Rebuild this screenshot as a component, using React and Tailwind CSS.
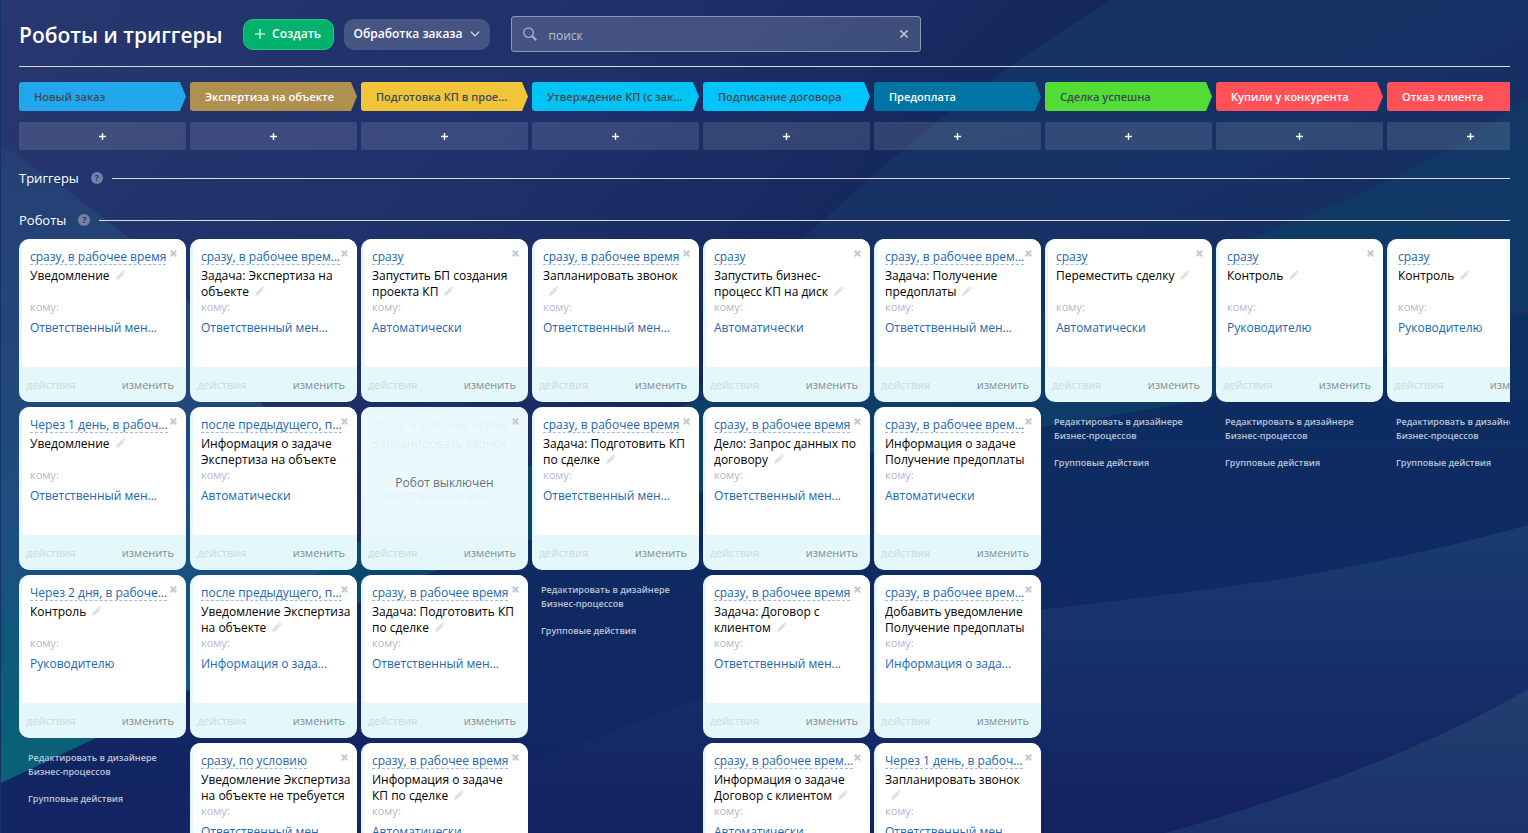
import React from "react";

const NOW = "сразу";
const WORK = "сразу, в рабочее время";
const WORK_CUT = "сразу, в рабочее врем...";
const MANAGER = "Ответственный мен...";
const AUTO = "Автоматически";
const HEAD = "Руководителю";

const columns = [
  {
    name: "Новый заказ",
    tone: "bg-[#22a7ec] text-[#3d4b58]",
    robots: [
      [WORK, "Уведомление", MANAGER],
      ["Через 1 день, в рабоч...", "Уведомление", MANAGER],
      ["Через 2 дня, в рабоче...", "Контроль", HEAD],
    ],
  },
  {
    name: "Экспертиза на объекте",
    tone: "bg-[#b0904f] text-white",
    robots: [
      [WORK_CUT, "Задача: Экспертиза на объекте", MANAGER],
      ["после предыдущего, п...", "Информация о задаче Экспертиза на объекте", AUTO],
      ["после предыдущего, п...", "Уведомление Экспертиза на объекте", "Информация о зада..."],
      ["сразу, по условию", "Уведомление Экспертиза на объекте не требуется", MANAGER],
    ],
  },
  {
    name: "Подготовка КП в прое...",
    tone: "bg-[#f1c53a] text-[#3d4b58]",
    robots: [
      [NOW, "Запустить БП создания проекта КП", AUTO],
      [WORK, "Запланировать звонок", MANAGER, true],
      [WORK, "Задача: Подготовить КП по сделке", MANAGER],
      [WORK, "Информация о задаче КП\u00a0по сделке", AUTO],
    ],
  },
  {
    name: "Утверждение КП (с зак...",
    tone: "bg-[#00c4f3] text-[#3d4b58]",
    robots: [
      [WORK, "Запланировать звонок", MANAGER],
      [WORK, "Задача: Подготовить КП по сделке", MANAGER],
    ],
  },
  {
    name: "Подписание договора",
    tone: "bg-[#00c4fb] text-[#3d4b58]",
    robots: [
      [NOW, "Запустить бизнес-процесс КП на диск", AUTO],
      [WORK, "Дело: Запрос данных по договору", MANAGER],
      [WORK, "Задача: Договор с клиентом", MANAGER],
      [WORK_CUT, "Информация о задаче Договор с клиентом", AUTO],
    ],
  },
  {
    name: "Предоплата",
    tone: "bg-[#0075a5] text-white",
    robots: [
      [WORK_CUT, "Задача: Получение предоплаты", MANAGER],
      [WORK_CUT, "Информация о задаче Получение предоплаты", AUTO],
      [WORK_CUT, "Добавить уведомление Получение предоплаты", "Информация о зада..."],
      ["Через 1 день, в рабоч...", "Запланировать звонок", MANAGER],
    ],
  },
  {
    name: "Сделка успешна",
    tone: "bg-[#52dc35] text-[#3d4b58]",
    robots: [[NOW, "Переместить сделку", AUTO]],
  },
  {
    name: "Купили у конкурента",
    tone: "bg-[#ff5157] text-white",
    robots: [[NOW, "Контроль", HEAD]],
  },
  {
    name: "Отказ клиента",
    tone: "bg-[#ff5157] text-white",
    robots: [[NOW, "Контроль", HEAD]],
  },
];

function Backdrop() {
  return (
    <svg className="absolute inset-0 -z-10 h-full w-full" viewBox="0 0 1528 833" preserveAspectRatio="none" aria-hidden="true">
      <defs>
        <linearGradient id="base" x1="0" y1="0" x2="1" y2="0.5">
          <stop offset="0" stopColor="#28376f" />
          <stop offset="0.35" stopColor="#1e306a" />
          <stop offset="0.62" stopColor="#12265a" />
          <stop offset="1" stopColor="#102a5e" />
        </linearGradient>
        <linearGradient id="left" x1="0" y1="0" x2="0" y2="1">
          <stop offset="0" stopColor="#263f73" />
          <stop offset="0.35" stopColor="#22487a" />
          <stop offset="0.6" stopColor="#1b4f80" />
          <stop offset="0.75" stopColor="#0d5a78" />
          <stop offset="1" stopColor="#076677" />
        </linearGradient>
        <linearGradient id="slope" x1="0" y1="0" x2="1" y2="1">
          <stop offset="0" stopColor="#163565" />
          <stop offset="1" stopColor="#162d64" />
        </linearGradient>
        <linearGradient id="teal" x1="1" y1="0" x2="0" y2="1">
          <stop offset="0" stopColor="#123766" />
          <stop offset="0.5" stopColor="#0e3d66" />
          <stop offset="1" stopColor="#0a4f70" />
        </linearGradient>
        <linearGradient id="deep" x1="0" y1="0" x2="0" y2="1">
          <stop offset="0" stopColor="#0b2f60" />
          <stop offset="0.5" stopColor="#102a63" />
          <stop offset="1" stopColor="#132463" />
        </linearGradient>
        <linearGradient id="wave" x1="0" y1="0" x2="0" y2="1">
          <stop offset="0" stopColor="#193c70" />
          <stop offset="0.45" stopColor="#16306a" />
          <stop offset="1" stopColor="#132160" />
        </linearGradient>
        <linearGradient id="corner" x1="0" y1="0" x2="0" y2="1">
          <stop offset="0" stopColor="#20406f" />
          <stop offset="1" stopColor="#1b326b" />
        </linearGradient>
      </defs>
      <rect width="1528" height="833" fill="url(#base)" />
      <path d="M1112 0 Q960 90 805 237 Q740 300 690 410 L1528 420 V0Z" fill="url(#slope)" />
      <path d="M0 145 Q70 190 130 240 Q230 330 350 560 V833 H0Z" fill="url(#left)" />
      <path d="M1528 97 C1430 170 1330 208 1250 238 C1110 290 960 350 700 400 C600 430 500 480 340 550 L190 700 L500 620 L1100 440 L1528 310Z" fill="url(#teal)" />
      <path d="M0 783 L95 738 C250 660 330 610 430 573 C640 500 850 450 1040 427 C1250 398 1400 350 1528 315 V833 H0Z" fill="url(#deep)" />
      <path d="M350 833 C530 765 650 715 704 698 C850 640 960 618 1040 610 C1200 590 1330 580 1528 525 V833Z" fill="url(#wave)" />
      <path d="M1165 833 Q1390 770 1528 689 V833Z" fill="url(#corner)" />
    </svg>
  );
}

function Pencil() {
  return (
    <button type="button" aria-label="Переименовать" className="ml-[6px] inline-block h-[10px] w-[10px]">
      <svg viewBox="0 0 10 10" className="h-[10px] w-[10px]" fill="#dfe0e3">
        <path d="M7.6 0 L10 2.3 L9 3.3 L6.6 1Z M6 1.6 L8.4 3.9 L3.2 9 L0 10 L0.9 6.7Z" />
      </svg>
    </button>
  );
}

function Robot({ data: [when, title, who, off] }) {
  return (
    <article className="relative h-[163px] shrink-0 overflow-hidden rounded-[10px] bg-[#e4f7fb] pl-[3px]">
      <div className="flex h-[128px] flex-col items-start rounded-bl-[3px] rounded-tl-[8px] bg-white pl-2 pr-[6px] pt-[9px]">
        <a href="#when" className="h-[17px] whitespace-nowrap border-b border-dashed border-[#9dbbe0] leading-[17px] text-[#2067b0]">
          {when}
        </a>
        <h3 className="mt-[3px] h-8 w-full overflow-hidden leading-4 text-black">
          {title}
          <Pencil />
        </h3>
        <div className="text-[11px] leading-[14px] text-[#b3b8c8]">кому:</div>
        <a href="#who" className="mt-[5px] leading-[18px] text-[#2067b0]">
          {who}
        </a>
      </div>
      {off && (
        <div className="absolute inset-x-0 top-0 flex h-[128px] items-center justify-center bg-[#eaf9ff]/95 pt-6 text-[#68727d]">
          Робот выключен
        </div>
      )}
      <button type="button" aria-label="Удалить" className="absolute right-[9px] top-[11px] h-[7px] w-[7px]">
        <svg viewBox="0 0 7 7" className="h-[7px] w-[7px]" stroke="#c5c8cc" strokeWidth="2">
          <path d="M0.7 0.7 L6.3 6.3 M6.3 0.7 L0.7 6.3" />
        </svg>
      </button>
      <div className="flex h-[35px] items-center justify-between pl-1 pr-3 pt-[2px] text-[11px]">
        <button type="button" className="text-[#ccdade]">действия</button>
        <button type="button" className="text-[#7f8f97]">изменить</button>
      </div>
    </article>
  );
}

function SectionTitle({ children }) {
  return (
    <div className="flex h-[42px] items-center">
      <h2 className="pt-[2px] text-[13px] font-medium text-white">{children}</h2>
      <button type="button" aria-label="Справка" className="ml-3 flex h-3 w-3 items-center justify-center rounded-full bg-[#7481a6] text-[9px] font-bold text-[#25376b]">
        ?
      </button>
      <div className="ml-[9px] h-px flex-1 bg-[#d9d9d9]" />
    </div>
  );
}

export default function App() {
  return (
    <div className="relative isolate h-screen overflow-hidden border-l border-[#12346a] pl-[18px] pr-[18px] font-['Open_Sans','Noto_Sans',sans-serif] text-[12px]">
      <Backdrop />
      <header className="flex h-[67px] items-center border-b border-[#d9d9d9] pt-[2px]">
        <h1 className="whitespace-nowrap pt-[3px] text-[21px] font-semibold text-white">Роботы и триггеры</h1>
        <button type="button" className="ml-5 flex h-[31px] w-[91px] shrink-0 items-center justify-center gap-[7px] rounded-[10px] border border-[#22c47f] bg-[#00b26b] font-semibold text-white">
          <svg viewBox="0 0 10 10" className="h-[10px] w-[10px]" stroke="#fff" strokeWidth="1.2">
            <path d="M5 0V10M0 5H10" />
          </svg>
          Создать
        </button>
        <button type="button" className="ml-[10px] flex h-[31px] w-[146px] shrink-0 items-center justify-center gap-[7px] whitespace-nowrap rounded-[10px] bg-white/17 font-semibold text-white">
          Обработка заказа
          <svg viewBox="0 0 10 6" className="h-[6px] w-[10px]" fill="none" stroke="#e4e7ee" strokeWidth="1.2">
            <path d="M0.8 0.6 L5 4.8 L9.2 0.6" />
          </svg>
        </button>
        <label className="ml-[21px] flex h-9 w-[410px] items-center rounded-[3px] border border-[#8d96b3] bg-white/17 pl-[11px] pr-3">
          <svg viewBox="0 0 14 14" className="h-[14px] w-[14px]" fill="none" stroke="#a9b0c6">
            <circle cx="5.6" cy="5.6" r="4.8" strokeWidth="1.2" />
            <path d="M9.2 9.2 L13.2 13.2" strokeWidth="2" />
          </svg>
          <input type="text" aria-label="поиск" placeholder="поиск" className="ml-3 min-w-0 flex-1 bg-transparent pt-[3px] text-[12px] text-white outline-none placeholder:text-[#b9bfd0]" />
          <button type="button" aria-label="Очистить">
            <svg viewBox="0 0 8 8" className="h-2 w-2" stroke="#b9bfd0" strokeWidth="1.6">
              <path d="M0.4 0.4 L7.6 7.6 M7.6 0.4 L0.4 7.6" />
            </svg>
          </button>
        </label>
      </header>

      <div className="mt-[15px] flex gap-1 overflow-hidden">
        {columns.map((c) => (
          <div key={c.name} className="w-[167px] shrink-0">
            <div className={`flex h-[29px] items-center whitespace-nowrap rounded-l-[3px] pl-[15px] pt-px text-[11px] font-semibold [clip-path:polygon(0_0,161px_0,100%_50%,161px_100%,0_100%)] ${c.tone}`}>
              {c.name}
            </div>
            <button type="button" aria-label="Добавить" className="mt-[11px] flex h-7 w-full items-center justify-center rounded-[2px] bg-white/12">
              <svg viewBox="0 0 7 7" className="h-[7px] w-[7px]" stroke="#fff" strokeWidth="1.4">
                <path d="M3.5 0V7M0 3.5H7" />
              </svg>
            </button>
          </div>
        ))}
      </div>

      <div className="mt-[7px]">
        <SectionTitle>Триггеры</SectionTitle>
        <SectionTitle>Роботы</SectionTitle>
      </div>

      <main className="-mt-[2px] flex items-start gap-1 overflow-hidden">
        {columns.map((c) => (
          <section key={c.name} aria-label={c.name} className="flex w-[167px] shrink-0 flex-col gap-[5px]">
            {c.robots.map((r, i) => (
              <Robot key={i} data={r} />
            ))}
            <div className="flex flex-col items-start gap-[13px] pl-[9px] pr-4 pt-2 text-[9px] font-semibold leading-[14px] text-[#bcc4d6]">
              <a href="#designer">Редактировать в дизайнере Бизнес-процессов</a>
              <a href="#group">Групповые действия</a>
            </div>
          </section>
        ))}
      </main>
    </div>
  );
}
